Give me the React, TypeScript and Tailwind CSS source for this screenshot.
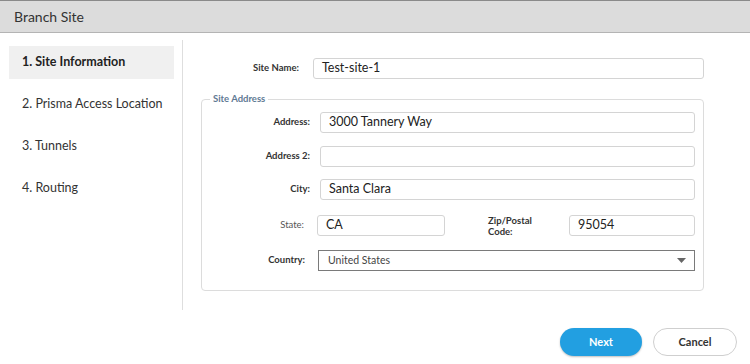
const steps = ["1. Site Information", "2. Prisma Access Location", "3. Tunnels", "4. Routing"];

function Field({ value, className = "" }: { value: string; className?: string }) {
  return (
    <div
      className={`h-[21px] flex items-center px-[8px] border border-[#d4d4d4] rounded-[3px] bg-white text-[12.5px] text-[#222] ${className}`}
    >
      {value}
    </div>
  );
}

export default function App() {
  return (
    <div className="w-[750px] h-[364px] bg-white overflow-hidden font-['Lato','Noto_Sans',sans-serif] text-[#333]">
      {/* Header */}
      <div className="h-[33px] bg-[#dcdcdc] border-t border-t-[#8a8a8a] border-b border-b-[#b4b4b4] flex items-center pl-[14px]">
        <span className="text-[14px] text-[#333]">Branch Site</span>
      </div>

      {/* Body */}
      <div className="flex pt-[7px] h-[277px]">
        <div className="w-[183px] border-r border-[#dedede] pt-[6px] pl-[9px] pr-[8px] flex flex-col gap-[9px]">
          {steps.map((s, i) => (
            <div
              key={s}
              className={`h-[33px] flex items-center pl-[13px] text-[12.5px] ${
                i === 0 ? "bg-[#f0f0f0] font-bold text-[#222]" : "text-[#333]"
              }`}
            >
              {s}
            </div>
          ))}
        </div>

        <div className="flex-1 pl-[18px] pr-[46px] pt-[18px]">
          <div className="flex items-center">
            <div className="w-[99px] text-right text-[9.5px] font-bold text-[#333] pr-[1px]">Site Name:</div>
            <Field value="Test-site-1" className="ml-[13px] flex-1 h-[20px]" />
          </div>

          <fieldset className="mt-[13px] border border-[#dcdcdc] rounded-[4px] pb-[19px] pr-[8px]">
            <legend className="ml-[8px] px-[3px] text-[9.5px] font-bold text-[#5f7a94] leading-[14px]">
              Site Address
            </legend>
            <div className="flex flex-col mt-[6px]">
              <div className="flex items-center">
                <div className="w-[108px] text-right text-[9.5px] font-bold">Address:</div>
                <Field value="3000 Tannery Way" className="ml-[10px] flex-1" />
              </div>
              <div className="flex items-center mt-[13px]">
                <div className="w-[108px] text-right text-[9.5px] font-bold">Address 2:</div>
                <Field value="" className="ml-[10px] flex-1" />
              </div>
              <div className="flex items-center mt-[12px]">
                <div className="w-[108px] text-right text-[9.5px] font-bold">City:</div>
                <Field value="Santa Clara" className="ml-[10px] flex-1" />
              </div>
              <div className="flex items-center h-[21px] mt-[15px]">
                <div className="w-[102px] text-right text-[9.5px] text-[#555]">State:</div>
                <Field value="CA" className="ml-[13px] w-[128px]" />
                <div className="ml-[43px] w-[81px] text-[9.5px] font-bold leading-[11px]">
                  Zip/Postal
                  <br />
                  Code:
                </div>
                <Field value="95054" className="flex-1" />
              </div>
              <div className="flex items-center mt-[14px]">
                <div className="w-[103px] text-right text-[9.5px] font-bold">Country:</div>
                <div className="ml-[13px] flex-1 h-[21px] border border-[#7a7a7a] flex items-center justify-between pl-[9px] pr-[8px] text-[10.5px] text-[#444]">
                  <span>United States</span>
                  <svg width="9" height="5" viewBox="0 0 9 5">
                    <polygon points="0,0 9,0 4.5,5" fill="#666" />
                  </svg>
                </div>
              </div>
            </div>
          </fieldset>
        </div>
      </div>

      {/* Footer */}
      <div className="flex justify-end gap-[11px] pr-[13px] pt-[18px]">
        <button className="w-[82px] h-[28px] rounded-full bg-[#229fe1] text-white text-[11px] font-bold shadow-[0_1px_2px_rgba(0,0,0,0.25)]">
          Next
        </button>
        <button className="w-[84px] h-[28px] rounded-full border border-[#cfcfcf] bg-white text-[#333] text-[11px] font-bold">
          Cancel
        </button>
      </div>
    </div>
  );
}
